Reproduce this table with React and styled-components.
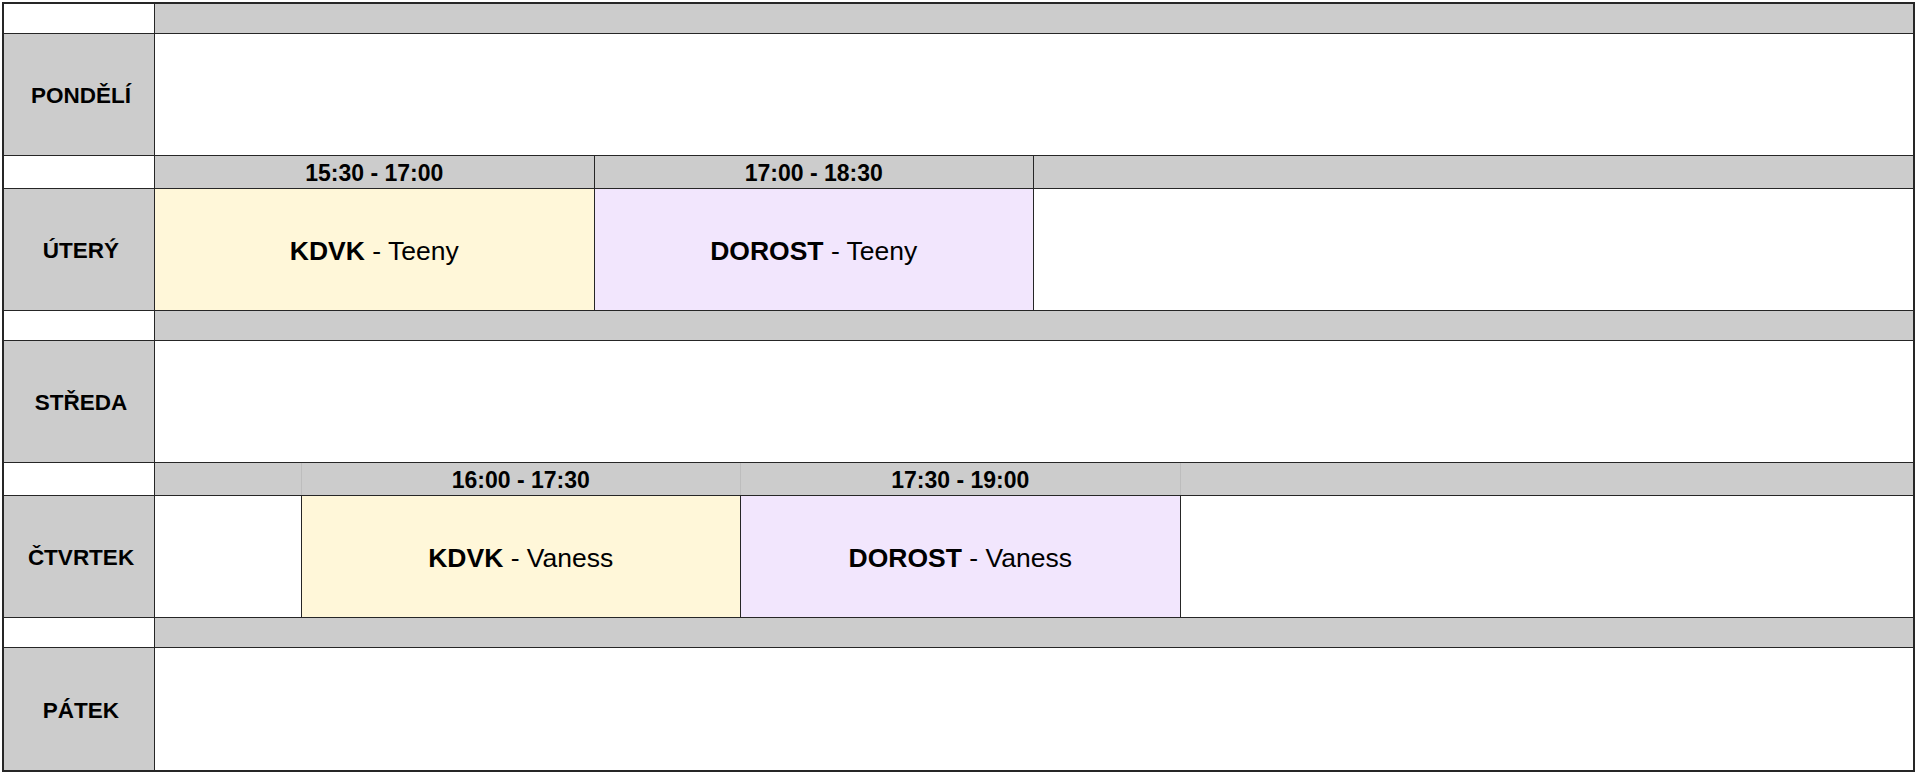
import React from 'react';
import styled, { createGlobalStyle } from 'styled-components';

const GlobalStyle = createGlobalStyle`
  * { box-sizing: border-box; }
  body {
    margin: 0;
    background: #ffffff;
    font-family: "Liberation Sans", Arial, sans-serif;
    color: #000;
  }
`;

const LINE = '#262626';
const SOFT_LINE = '#bdbdbd';
const GREY = '#cccccc';

const days = [
  { name: 'PONDĚLÍ', header: null, slots: [{ span: 12 }] },
  {
    name: 'ÚTERÝ',
    header: {
      soft: false,
      cells: [
        { span: 3, label: '15:30 - 17:00' },
        { span: 3, label: '17:00 - 18:30' },
        { span: 6 },
      ],
    },
    slots: [
      { span: 3, tone: 'yellow', group: 'KDVK', coach: 'Teeny' },
      { span: 3, tone: 'purple', group: 'DOROST', coach: 'Teeny' },
      { span: 6 },
    ],
  },
  { name: 'STŘEDA', header: null, slots: [{ span: 12 }] },
  {
    name: 'ČTVRTEK',
    header: {
      soft: true,
      cells: [
        { span: 1 },
        { span: 3, label: '16:00 - 17:30' },
        { span: 3, label: '17:30 - 19:00' },
        { span: 5 },
      ],
    },
    slots: [
      { span: 1 },
      { span: 3, tone: 'yellow', group: 'KDVK', coach: 'Vaness' },
      { span: 3, tone: 'purple', group: 'DOROST', coach: 'Vaness' },
      { span: 5 },
    ],
  },
  { name: 'PÁTEK', header: null, slots: [{ span: 12 }] },
];

const tones = {
  yellow: '#fff7d9',
  purple: '#f2e6fd',
  white: '#ffffff',
};

const Timetable = () => (
  <>
    <GlobalStyle />
    <Page>
      <Table>
        {days.map((day, i) => (
          <React.Fragment key={day.name}>
            <Row $height={day.header ? 33 : 30}>
              <DayCell $white />
              {day.header ? (
                day.header.cells.map((c, j) => (
                  <TimeCell
                    key={j}
                    $span={c.span}
                    $soft={day.header.soft}
                    $last={j === day.header.cells.length - 1}
                  >
                    {c.label}
                  </TimeCell>
                ))
              ) : (
                <TimeCell $span={12} $last />
              )}
            </Row>
            <Row $height={122} $last={i === days.length - 1}>
              <DayCell>{day.name}</DayCell>
              {day.slots.map((s, j) => (
                <Slot
                  key={j}
                  $span={s.span}
                  $tone={s.tone || 'white'}
                  $last={j === day.slots.length - 1}
                >
                  {s.group && (
                    <>
                      <b>{s.group}</b> - {s.coach}
                    </>
                  )}
                </Slot>
              ))}
            </Row>
          </React.Fragment>
        ))}
      </Table>
    </Page>
  </>
);

const Page = styled.div`
  padding: 2px 6px 2px 2px;
`;

const Table = styled.div`
  width: 1913px;
  border: 2px solid ${LINE};
  display: flex;
  flex-direction: column;
`;

const Row = styled.div`
  display: grid;
  grid-template-columns: 151px repeat(12, 1fr);
  height: ${(p) => p.$height}px;
  border-bottom: ${(p) => (p.$last ? 'none' : `1px solid ${LINE}`)};
`;

const DayCell = styled.div`
  display: flex;
  align-items: center;
  justify-content: center;
  background: ${(p) => (p.$white ? '#ffffff' : GREY)};
  border-right: 1px solid ${LINE};
  font-size: 22.5px;
  font-weight: 700;
  padding: 3px 0 0 4px;
`;

const TimeCell = styled.div`
  grid-column: span ${(p) => p.$span};
  display: flex;
  align-items: center;
  justify-content: center;
  background: ${GREY};
  border-right: ${(p) =>
    p.$last ? 'none' : `1px solid ${p.$soft ? SOFT_LINE : LINE}`};
  font-size: 23px;
  font-weight: 700;
  padding-top: 3px;
`;

const Slot = styled.div`
  grid-column: span ${(p) => p.$span};
  display: flex;
  align-items: center;
  justify-content: center;
  background: ${(p) => tones[p.$tone]};
  border-right: ${(p) => (p.$last ? 'none' : `1px solid ${LINE}`)};
  font-size: 26.5px;
  white-space: pre;
  padding-top: 3px;

  b {
    font-weight: 700;
  }
`;

export default Timetable;
